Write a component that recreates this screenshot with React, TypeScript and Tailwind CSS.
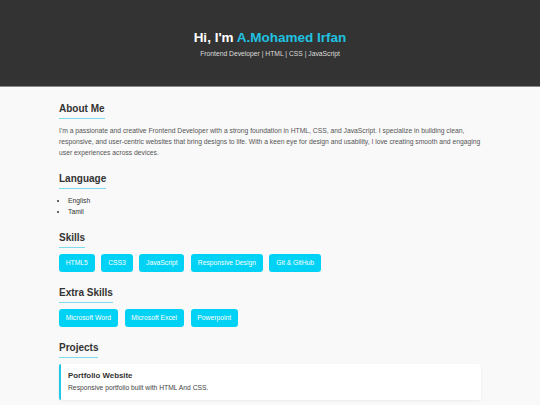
import React from 'react';

const skills = ['HTML5', 'CSS3', 'JavaScript', 'Responsive Design', 'Git & GitHub'];
const extraSkills = ['Microsoft Word', 'Microsoft Excel', 'Powerpoint'];

const SectionTitle = ({ children }: { children: React.ReactNode }) => (
  <h2 className="w-fit text-[10px] leading-[12px] font-bold text-[#333] pb-[2.5px] border-b-[1.5px] border-[#7fdcec] mb-[6px]">
    {children}
  </h2>
);

const Tag = ({ label }: { label: string }) => (
  <span className="bg-[#00d2f5] text-white text-[6.75px] leading-[9px] px-[6.75px] py-[4.5px] rounded-[3px]">
    {label}
  </span>
);

const App = () => {
  return (
    <div className="min-h-screen bg-[#f9f9f9] font-['Liberation_Sans',Arial,sans-serif]">
      {/* Header */}
      <header className="bg-[#333] text-center pt-[30px] pb-[28.5px] border-b border-[#8a8a8a]">
        <h1 className="text-[13.5px] leading-[16px] font-bold text-white mb-[2.5px]">
          Hi, I'm <span className="text-[#20c2e2]">A.Mohamed Irfan</span>
        </h1>
        <p className="text-[6.75px] leading-[9px] text-[#ddd]">
          Frontend Developer | HTML | CSS | JavaScript
        </p>
      </header>

      {/* Main Content */}
      <main className="max-w-[422px] mx-auto pt-[16px] flex flex-col gap-[15.5px]">
        <section>
          <SectionTitle>About Me</SectionTitle>
          <p className="text-[6.75px] leading-[11px] text-[#555]">
            I'm a passionate and creative Frontend Developer with a strong foundation in HTML, CSS, and JavaScript. I specialize in building clean, responsive, and user-centric websites that bring designs to life. With a keen eye for design and usability, I love creating smooth and engaging user experiences across devices.
          </p>
        </section>

        <section>
          <SectionTitle>Language</SectionTitle>
          <ul className="list-disc pl-[9px] text-[6.75px] leading-[11px] text-[#333]">
            <li>English</li>
            <li>Tamil</li>
          </ul>
        </section>

        <section>
          <SectionTitle>Skills</SectionTitle>
          <div className="flex flex-wrap gap-[6.75px]">
            {skills.map((s) => (
              <Tag key={s} label={s} />
            ))}
          </div>
        </section>

        <section>
          <SectionTitle>Extra Skills</SectionTitle>
          <div className="flex flex-wrap gap-[6.75px]">
            {extraSkills.map((s) => (
              <Tag key={s} label={s} />
            ))}
          </div>
        </section>

        <section>
          <SectionTitle>Projects</SectionTitle>
          <div className="bg-white border-l-[2.25px] border-[#20c8e6] rounded-[2px] shadow-[0_1px_3px_rgba(0,0,0,0.06)] pt-[7px] pb-[7px] pl-[7px]">
            <h3 className="text-[7.875px] leading-[10px] font-bold text-[#333] mb-[1px]">Portfolio Website</h3>
            <p className="text-[6.75px] leading-[11px] text-[#444]">Responsive portfolio built with HTML And CSS.</p>
          </div>
        </section>
      </main>
    </div>
  );
};

export default App;
